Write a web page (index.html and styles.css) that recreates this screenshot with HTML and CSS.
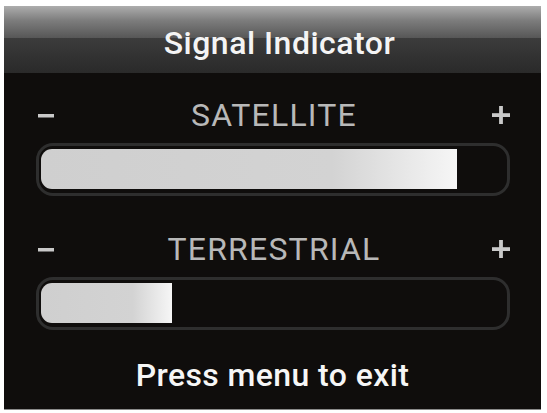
FILE: index.html
```html
<!DOCTYPE html>
<html>
<head>
<meta charset="utf-8">
<link rel="stylesheet" href="styles.css">
</head>
<body>
<div class="panel">
  <div class="header">Signal Indicator</div>
  <div class="row row-first">
    <svg class="sign" viewBox="0 0 18 18" width="18" height="18"><rect x="0" y="8" width="16" height="3.5" fill="#c9c9c9"/></svg>
    <div class="label">SATELLITE</div>
    <svg class="sign" viewBox="0 0 18 18" width="18" height="18"><rect x="0" y="7.2" width="18" height="3.8" fill="#c9c9c9"/><rect x="7.1" y="0" width="3.8" height="18" fill="#c9c9c9"/></svg>
  </div>
  <div class="track"><div class="fill" style="width:416px"></div></div>
  <div class="row row-second">
    <svg class="sign" viewBox="0 0 18 18" width="18" height="18"><rect x="0" y="8" width="16" height="3.5" fill="#c9c9c9"/></svg>
    <div class="label">TERRESTRIAL</div>
    <svg class="sign" viewBox="0 0 18 18" width="18" height="18"><rect x="0" y="7.2" width="18" height="3.8" fill="#c9c9c9"/><rect x="7.1" y="0" width="3.8" height="18" fill="#c9c9c9"/></svg>
  </div>
  <div class="track"><div class="fill" style="width:131px"></div></div>
  <div class="footer">Press menu to exit</div>
</div>
</body>
</html>
```
FILE: styles.css
```css
html, body {
  margin: 0;
  padding: 0;
  background: #ffffff;
}
body {
  font-family: Roboto, "Liberation Sans", sans-serif;
}
.panel {
  margin: 6px 0 0 4px;
  width: 537px;
  height: 403px;
  background: #0f0d0c;
  border-bottom: 1px solid #8a8a8a;
  display: flex;
  flex-direction: column;
  overflow: hidden;
}
.header {
  height: 67px;
  flex: none;
  background: linear-gradient(to bottom, #adadad 0%, #7c7c7c 22%, #585858 47%, #3c3c3c 48%, #323232 75%, #2a2a2a 100%);
  color: #f4f4f4;
  font-size: 32px;
  font-weight: 500;
  letter-spacing: 0.5px;
  display: flex;
  align-items: center;
  justify-content: center;
  padding: 6px 0 0 14px;
  box-sizing: border-box;
}
.row {
  height: 40px;
  flex: none;
  display: grid;
  grid-template-columns: 18px 1fr 18px;
  align-items: center;
  padding: 0 31px 0 34px;
}
.row-first { margin-top: 22px; }
.row-second { margin-top: 33px; }
.sign { display: block; }
.label {
  text-align: center;
  color: #b8b8b8;
  font-size: 32px;
  line-height: 40px;
  letter-spacing: 1.2px;
}
.track {
  margin: 8px 0 0 32px;
  width: 474px;
  height: 53px;
  box-sizing: border-box;
  border: 3px solid #2e2e2e;
  border-radius: 17px;
  padding: 3px 2px 4px;
  flex: none;
}
.fill {
  height: 40px;
  border-radius: 11px 0 0 11px;
  background: linear-gradient(to right, #cfcfcf 0%, #d3d3d3 70%, #f6f6f6 100%);
}
.footer {
  margin-top: 25px;
  height: 40px;
  line-height: 40px;
  text-align: center;
  color: #f6f6f6;
  font-size: 32px;
  font-weight: 500;
  letter-spacing: 0.4px;
}
```
